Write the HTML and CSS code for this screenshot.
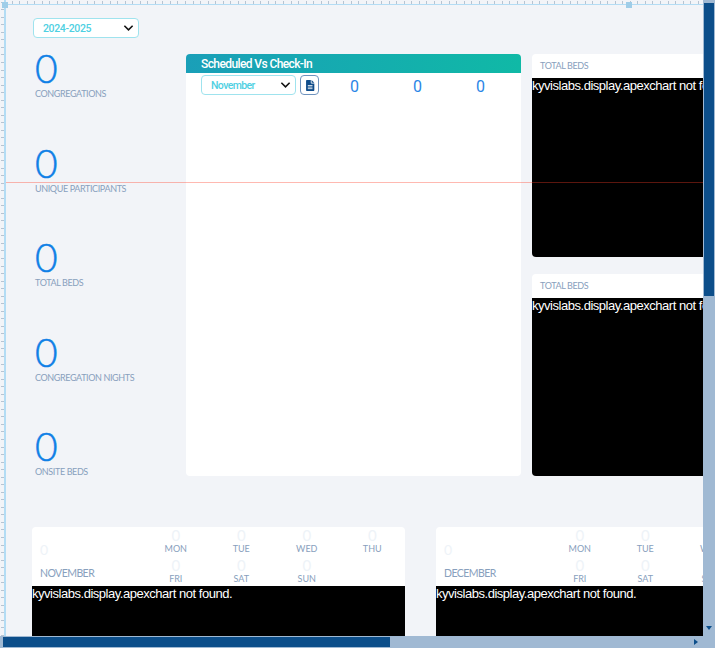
FILE: index.html
```html
<!DOCTYPE html>
<html lang="en">
<head>
<meta charset="utf-8">
<title>Dashboard</title>
<link rel="stylesheet" href="styles.css">
</head>
<body>
<div class="viewport">
  <main class="dash">
    <div class="year-row">
      <div class="select select-year"><span>2024-2025</span><svg class="chev" viewBox="0 0 12 8"><path d="M1.5 1.5 6 6l4.500-4.500"/></svg></div>
    </div>
    <div class="top-row">
      <section class="stats">
        <div class="stat"><div class="stat-num">0</div><div class="stat-label">CONGREGATIONS</div></div>
        <div class="stat"><div class="stat-num">0</div><div class="stat-label">UNIQUE PARTICIPANTS</div></div>
        <div class="stat"><div class="stat-num">0</div><div class="stat-label">TOTAL BEDS</div></div>
        <div class="stat"><div class="stat-num">0</div><div class="stat-label">CONGREGATION NIGHTS</div></div>
        <div class="stat"><div class="stat-num">0</div><div class="stat-label">ONSITE BEDS</div></div>
      </section>
      <section class="sched">
        <header class="sched-head">Scheduled Vs Check-In</header>
        <div class="sched-tools">
          <div class="select select-month"><span>November</span><svg class="chev" viewBox="0 0 12 8"><path d="M1.5 1.5 6 6l4.500-4.500"/></svg></div>
          <div class="doc-btn"><svg viewBox="0 0 12 14"><path d="M1 1.200C1 .6 1.500 0 2.100 0H7v3.500c0 .5.400.9.900.9H11.500v8.300c0 .7-.5 1.300-1.200 1.300H2.200C1.500 14 1 13.400 1 12.700Z"/><path d="M8 0l3.500 3.400H8Z"/><path class="doc-lines" d="M3.200 7h6M3.200 9h6M3.200 11h6"/></svg></div>
          <div class="sched-vals"><span>0</span><span>0</span><span>0</span></div>
        </div>
      </section>
      <section class="side">
        <article class="chart-card"><h3 class="chart-title">TOTAL BEDS</h3><div class="missing">kyvislabs.display.apexchart not found.</div></article>
        <article class="chart-card"><h3 class="chart-title">TOTAL BEDS</h3><div class="missing">kyvislabs.display.apexchart not found.</div></article>
      </section>
    </div>
    <div class="month-row">
      <article class="month">
        <div class="month-head">
          <div class="month-name"><div class="faint-num">0</div><div class="month-label">NOVEMBER</div></div>
          <div class="days">
            <div class="day"><b>0</b><span>MON</span></div><div class="day"><b>0</b><span>TUE</span></div><div class="day"><b>0</b><span>WED</span></div><div class="day"><b>0</b><span>THU</span></div>
            <div class="day"><b>0</b><span>FRI</span></div><div class="day"><b>0</b><span>SAT</span></div><div class="day"><b>0</b><span>SUN</span></div>
          </div>
        </div>
        <div class="missing">kyvislabs.display.apexchart not found.</div>
      </article>
      <article class="month">
        <div class="month-head">
          <div class="month-name"><div class="faint-num">0</div><div class="month-label">DECEMBER</div></div>
          <div class="days">
            <div class="day"><b>0</b><span>MON</span></div><div class="day"><b>0</b><span>TUE</span></div><div class="day"><b>0</b><span>WED</span></div><div class="day"><b>0</b><span>THU</span></div>
            <div class="day"><b>0</b><span>FRI</span></div><div class="day"><b>0</b><span>SAT</span></div><div class="day"><b>0</b><span>SUN</span></div>
          </div>
        </div>
        <div class="missing">kyvislabs.display.apexchart not found.</div>
      </article>
    </div>
  </main>

  <div class="guide"></div>
  <div class="ruler ruler-top"></div>
  <div class="ruler ruler-left"></div>
  <div class="handle handle-corner"></div>
  <div class="handle handle-top"></div>
  <div class="sbar sbar-v"><div class="thumb thumb-v"></div><i class="arrow arrow-down"></i></div>
  <div class="sbar sbar-h"><div class="thumb thumb-h"></div><i class="arrow arrow-right"></i></div>
</div>
</body>
</html>
```

FILE: styles.css
```css
* { box-sizing: border-box; }
html, body { margin: 0; padding: 0; }
body { font-family: "Lato", "Liberation Sans", sans-serif; background: #f2f4f8; }

.viewport { position: relative; width: 715px; height: 648px; overflow: hidden; background: #f2f4f8; }
.dash { display: flex; flex-direction: column; width: 1100px; padding: 18px 0 0 32px; }

.year-row { display: flex; height: 36px; padding-left: 1px; }
.select { display: flex; align-items: center; justify-content: space-between; background: #fff; border: 1px solid #9fe3ee; border-radius: 4px; color: #4fd0e2; font-family: "Roboto", sans-serif; font-size: 10.500px; font-weight: 500; }
.select-year { width: 106px; height: 20px; padding: 0 4px 0 9px; letter-spacing: -.35px; }
.select-month { width: 95px; height: 20px; padding: 0 4px 0 9px; letter-spacing: -.6px; }
.chev { width: 11px; height: 8px; fill: none; stroke: #111; stroke-width: 1.700; }

.top-row { display: flex; align-items: flex-start; }
.stats { display: flex; flex-direction: column; width: 154px; margin-top: -1px; padding-left: 3px; gap: 14.500px; }
.stat { height: 80px; }
.stat-num { font-size: 39px; font-weight: 300; -webkit-text-stroke: .5px #0f80e6; line-height: 31px; color: #0f80e6; margin-bottom: 3px; }
.stat-label { font-size: 9px; line-height: 12px; padding-top: 1px; color: #88a0bd; letter-spacing: -.38px; }

.sched { width: 335px; height: 422px; background: #fff; border-radius: 4px; }
.sched-head { height: 19px; padding-left: 15px; border-radius: 4px 4px 0 0; background: linear-gradient(90deg, #1a9fb8, #10b9a6); color: #fff; font-family: "Roboto", sans-serif; font-size: 12px; font-weight: 500; line-height: 20px; letter-spacing: -.6px; }
.sched-tools { display: flex; align-items: flex-start; padding: 2px 0 0 15px; }
.doc-btn { display: flex; align-items: center; justify-content: center; width: 19px; height: 20px; margin-left: 4px; background: #fff; border: 1px solid #6f93be; border-radius: 4px; }
.doc-btn svg { width: 10px; height: 11px; fill: #0f4c8a; }
.doc-btn .doc-lines { fill: none; stroke: #fff; stroke-width: 1; }
.sched-vals { display: flex; padding-top: 2px; }
.sched-vals span { width: 63px; text-align: center; color: #2a86e6; font-family: "Roboto", sans-serif; font-size: 16px; line-height: 20px; }
.sched-vals span:first-child { margin-left: 4px; }

.side { display: flex; flex-direction: column; gap: 17px; width: 350px; margin-left: 11px; }
.chart-card { display: flex; flex-direction: column; height: 203px; background: #fff; border-radius: 4px; overflow: hidden; }
.chart-card:last-child { height: 202px; }
.chart-title { height: 24px; margin: 0; padding-left: 8px; color: #88a0bd; font-size: 9px; font-weight: 400; line-height: 24px; letter-spacing: -.38px; }
.missing { flex: 1; background: #000; color: #fff; font-family: "Liberation Sans", sans-serif; font-size: 13px; line-height: 15px; letter-spacing: -.47px; white-space: nowrap; }

.month-row { display: flex; gap: 31px; margin-top: 16px; }
.month { display: flex; flex-direction: column; flex: none; width: 373px; height: 200px; background: #fff; border-radius: 4px 4px 0 0; overflow: hidden; }
.month-head { display: flex; height: 59px; }
.month-name { width: 111px; padding: 14px 0 0 8px; }
.faint-num { color: #eef3f8; font-size: 14px; line-height: 18px; }
.month-label { margin-top: 8px; color: #88a0bd; font-size: 10.500px; line-height: 13px; letter-spacing: -.55px; }
.days { display: grid; grid-template-columns: repeat(4, 65.500px); grid-auto-rows: 30px; width: 262px; padding-top: 1px; }
.day { display: flex; flex-direction: column; align-items: center; }
.day b { color: #eef3f8; font-size: 15px; font-weight: 400; line-height: 15px; height: 15px; }
.day span { color: #88a0bd; font-size: 9px; line-height: 12px; }

.guide { position: absolute; left: 0; right: 12px; top: 182px; height: 1px; background: rgba(255, 60, 40, .36); }
.ruler { position: absolute; background-color: #f2f4f8; }
.ruler-top { left: 0; top: 0; width: 703px; height: 5px; border-bottom: 1px solid #b3dcf4; background-image: repeating-linear-gradient(90deg, #b7c4d2 0 1px, transparent 1px 7.540px); background-size: 100% 3px; background-repeat: no-repeat; background-position: 4px 1px; }
.ruler-left { left: 0; top: 0; width: 6px; height: 636px; border-right: 2px solid #b3dcf4; background-image: repeating-linear-gradient(0deg, #b7c4d2 0 1px, transparent 1px 7.540px); background-size: 3px 100%; background-repeat: no-repeat; background-position: 1px 0; }
.handle { position: absolute; width: 6px; height: 6px; background: #9fcde8; }
.handle-corner { left: 2px; top: 2px; }
.handle-top { left: 626px; top: 2px; }

.sbar { position: absolute; background: #a0b9d3; }
.sbar-v { left: 703px; top: 0; width: 12px; height: 648px; }
.sbar-h { left: 0; top: 636px; width: 715px; height: 12px; }
.thumb { position: absolute; background: #0c4e8a; }
.thumb-v { left: 1px; top: 3px; width: 10px; height: 293px; }
.thumb-h { left: 3px; top: 1px; width: 387px; height: 10px; }
.arrow { position: absolute; width: 0; height: 0; border-style: solid; border-color: transparent; }
.arrow-down { left: 3px; top: 626px; border-width: 4px 3px 0; border-top-color: #0c4e8a; }
.arrow-right { left: 694px; top: 3px; border-width: 3px 0 3px 4px; border-left-color: #0c4e8a; }
```
